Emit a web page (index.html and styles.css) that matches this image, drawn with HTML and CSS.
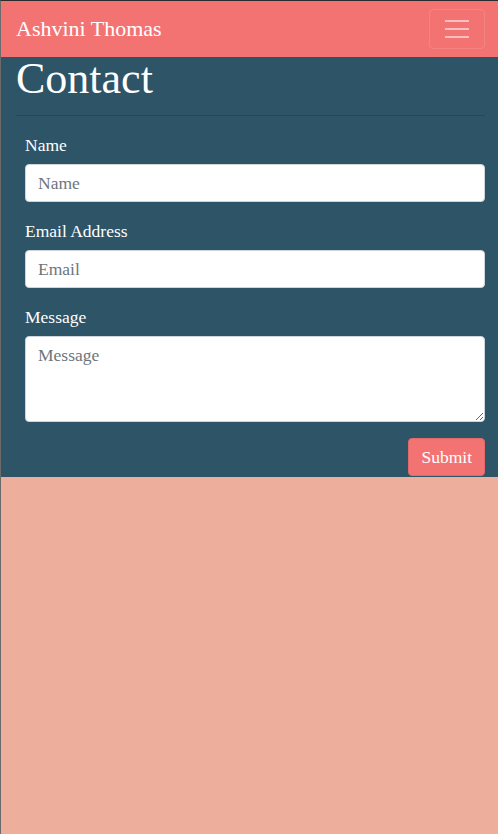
FILE: index.html
```html
<!DOCTYPE html>
<html>
<head>
<meta charset="utf-8">
<link rel="stylesheet" href="styles.css">
</head>
<body>
<nav class="navbar">
  <span class="brand">Ashvini Thomas</span>
  <button class="toggler" aria-label="menu">
    <span class="bar"></span><span class="bar"></span><span class="bar"></span>
  </button>
</nav>
<section class="contact">
  <h1 class="title">Contact</h1>
  <hr class="rule">
  <form class="form">
    <div class="group">
      <label class="label">Name</label>
      <input class="field" type="text" placeholder="Name">
    </div>
    <div class="group">
      <label class="label">Email Address</label>
      <input class="field" type="email" placeholder="Email">
    </div>
    <div class="group">
      <label class="label">Message</label>
      <textarea class="field area" placeholder="Message"></textarea>
    </div>
    <div class="actions">
      <button class="submit" type="button">Submit</button>
    </div>
  </form>
</section>
<div class="rest"></div>
</body>
</html>
```
FILE: styles.css
```css
* { box-sizing: border-box; }
html, body { margin: 0; padding: 0; }
body {
  background: #edae9b;
  font-family: "Liberation Serif", "DejaVu Serif", serif;
  border-top: 1px solid #2b2b2b;
  border-left: 1px solid #6b6b6b;
  min-height: 834px;
}
.navbar {
  background: #f37373;
  height: 56px;
  display: flex;
  align-items: center;
  justify-content: space-between;
  padding: 0 13px 0 15px;
}
.brand {
  color: #fff;
  font-size: 22px;
}
.toggler {
  width: 56px;
  height: 40px;
  background: transparent;
  border: 1px solid rgba(255,255,255,0.12);
  border-radius: 4px;
  display: flex;
  flex-direction: column;
  justify-content: center;
  align-items: center;
  gap: 6px;
  padding: 0;
}
.bar {
  display: block;
  width: 24px;
  height: 2px;
  background: rgba(255,255,255,0.55);
}
.contact {
  background: #2d5467;
  padding: 0 13px 1px 15px;
}
.title {
  margin: 0;
  color: #fff;
  font-weight: normal;
  font-size: 44px;
  line-height: 44px;
  padding-top: 0;
}
.rule {
  border: 0;
  border-top: 1px solid rgba(0,0,0,0.15);
  margin: 14px 0 18px 0;
}
.form {
  padding: 0 0 0 9px;
}
.group {
  margin-bottom: 18px;
}
.label {
  display: block;
  color: #fff;
  font-size: 17.5px;
  line-height: 22px;
  margin-bottom: 8px;
}
.field {
  display: block;
  width: 100%;
  height: 38px;
  border: 1px solid #ced4da;
  border-radius: 4px;
  background: #fff;
  padding: 6px 12px;
  font-family: "Liberation Serif", "DejaVu Serif", serif;
  font-size: 17.5px;
  color: #495057;
}
.field::placeholder { color: #6c757d; }
.area {
  height: 86px;
  padding-top: 8px;
  resize: vertical;
}
.actions {
  display: flex;
  justify-content: flex-end;
  margin-top: -2px;
}
.submit {
  background: #f37373;
  color: #fff;
  border: 1px solid #e06a6a;
  border-radius: 4px;
  height: 38px;
  padding: 0 12px;
  font-family: "Liberation Serif", "DejaVu Serif", serif;
  font-size: 17.5px;
}
```
